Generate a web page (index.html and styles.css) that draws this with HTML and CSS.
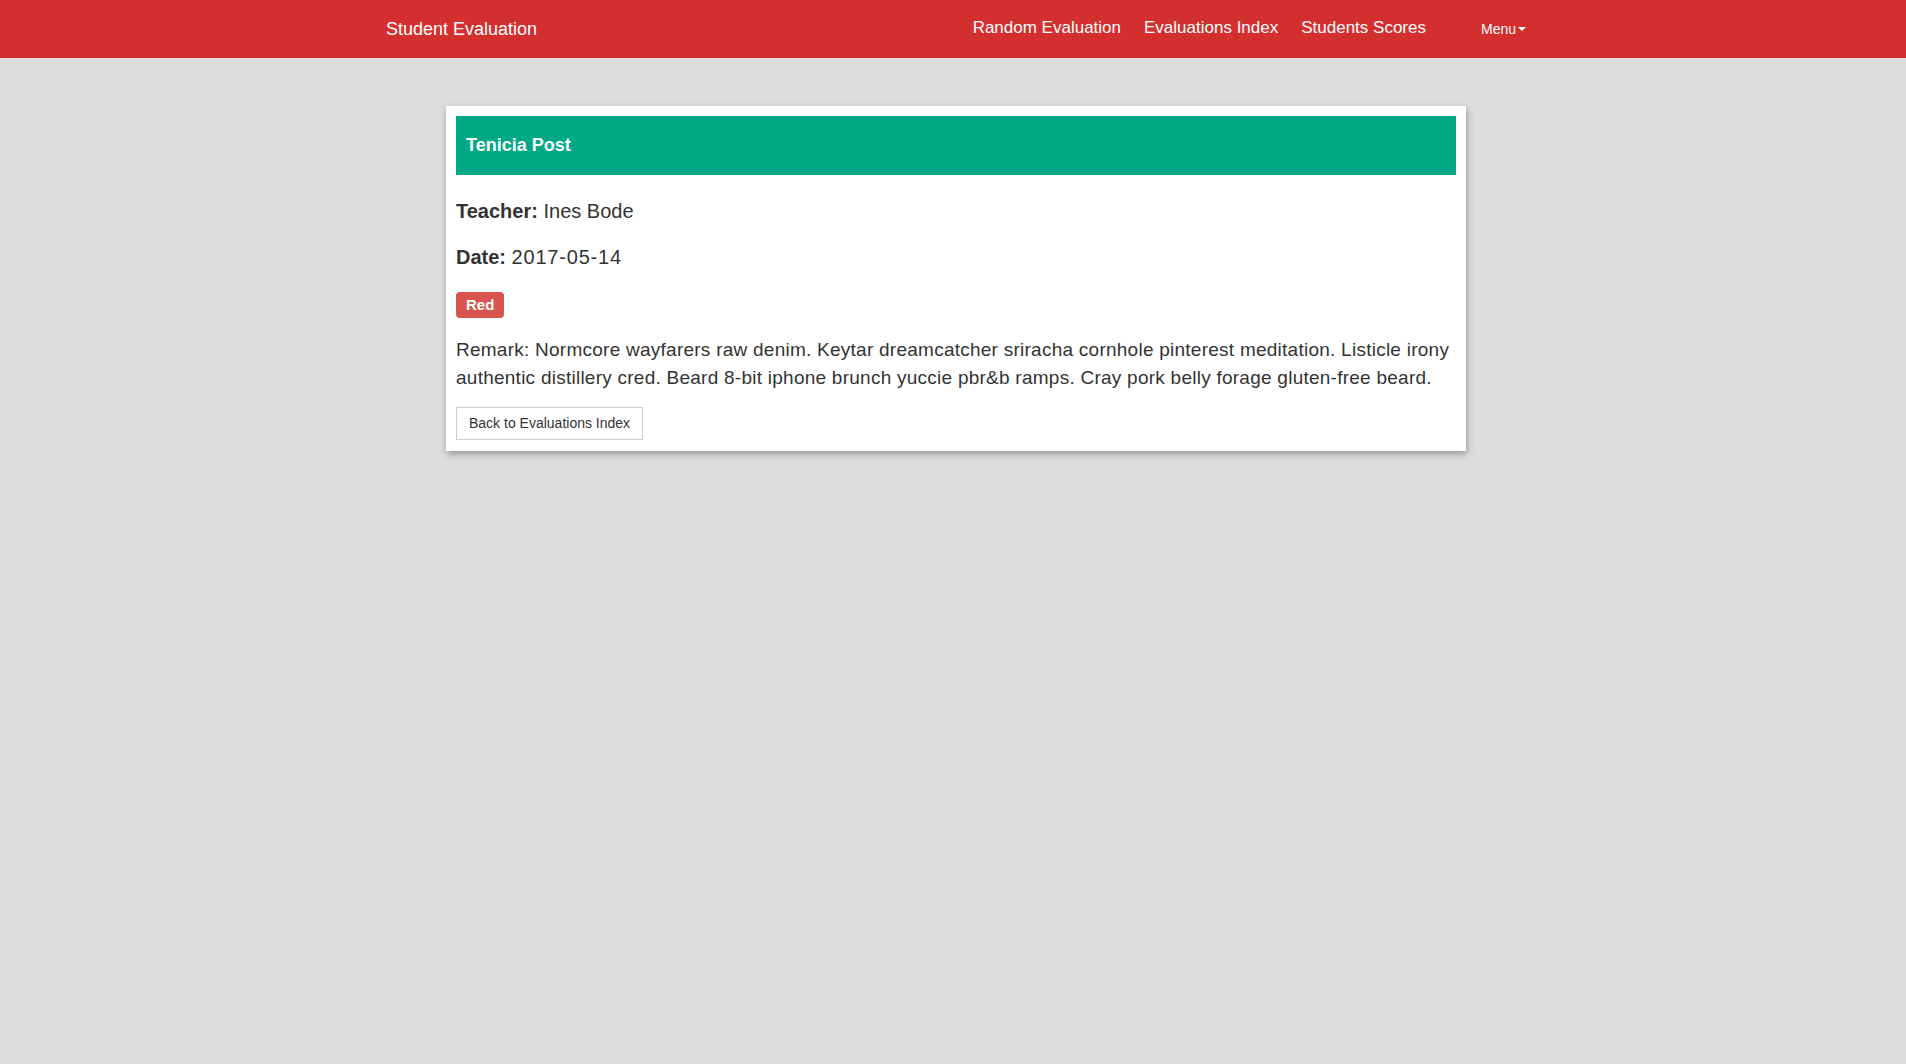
FILE: index.html
```html
<!DOCTYPE html>
<html lang="en">
<head>
<meta charset="utf-8">
<title>Student Evaluation</title>
<link rel="stylesheet" href="styles.css">
</head>
<body>
<nav class="navbar">
  <div class="nav-inner">
    <a class="brand" href="#">Student Evaluation</a>
    <div class="nav-right">
      <a class="nav-link" href="#">Random Evaluation</a>
      <a class="nav-link" href="#">Evaluations Index</a>
      <a class="nav-link" href="#">Students Scores</a>
      <a class="nav-menu" href="#">Menu<span class="caret"></span></a>
    </div>
  </div>
</nav>
<main class="page">
  <section class="card">
    <div class="card-header">Tenicia Post</div>
    <p class="field"><strong>Teacher:</strong> Ines Bode</p>
    <p class="field"><strong>Date:</strong> <span class="date">2017-05-14</span></p>
    <div class="badge-row"><span class="badge">Red</span></div>
    <p class="remark">Remark: Normcore wayfarers raw denim. Keytar dreamcatcher sriracha cornhole pinterest meditation. Listicle irony authentic distillery cred. Beard 8-bit iphone brunch yuccie pbr&amp;b ramps. Cray pork belly forage gluten-free beard.</p>
    <a class="btn" href="#">Back to Evaluations Index</a>
  </section>
</main>
</body>
</html>
```
FILE: styles.css
```css
* { box-sizing: border-box; }
html, body { margin: 0; padding: 0; }
body {
  background: #dddddd;
  font-family: "Liberation Sans", Arial, sans-serif;
  color: #333333;
  min-height: 1064px;
}
a { text-decoration: none; }

.navbar {
  background: #d32f2f;
  height: 58px;
}
.nav-inner {
  width: 1146px;
  margin: 0 auto;
  height: 100%;
  display: flex;
  align-items: center;
  justify-content: space-between;
  padding: 0 0 2px 6px;
}
.brand {
  color: #ffffff;
  font-size: 18px;
  line-height: 20px;
  padding-top: 1px;
}
.nav-right {
  display: flex;
  align-items: center;
}
.nav-link {
  color: #ffffff;
  font-size: 17px;
  line-height: 20px;
  margin-right: 23px;
}
.nav-link:nth-child(3) { margin-right: 55px; }
.nav-menu {
  color: #ffffff;
  font-size: 14px;
  line-height: 20px;
  display: flex;
  align-items: center;
  padding-top: 1px;
}
.caret {
  display: inline-block;
  width: 0;
  height: 0;
  margin-left: 2px;
  border-top: 4px solid #ffffff;
  border-left: 4px solid transparent;
  border-right: 4px solid transparent;
}

.page {
  padding-top: 48px;
  padding-left: 6px;
  display: flex;
  justify-content: center;
}
.card {
  width: 1020px;
  background: #ffffff;
  padding: 10px 10px 11px;
  box-shadow: 1px 3px 7px rgba(0, 0, 0, 0.32);
}
.card-header {
  background: #00a886;
  color: #ffffff;
  font-weight: bold;
  font-size: 18px;
  height: 59px;
  padding: 0 10px;
  display: flex;
  align-items: center;
}
.field {
  font-size: 20px;
  line-height: 28px;
  margin: 0;
}
.date { letter-spacing: 0.8px; }
.card-header + .field { margin-top: 22px; }
.field + .field { margin-top: 18px; }
.badge-row {
  margin-top: 21px;
  line-height: 0;
}
.badge {
  display: inline-block;
  background: #d9534f;
  color: #ffffff;
  font-weight: bold;
  font-size: 15px;
  line-height: 26px;
  height: 26px;
  padding: 0 10px;
  border-radius: 4px;
}
.remark {
  font-size: 19px;
  letter-spacing: 0.25px;
  line-height: 28px;
  margin: 18px 0 15px;
}
.btn {
  display: inline-block;
  color: #333333;
  font-size: 14px;
  line-height: 31px;
  height: 33px;
  padding: 0 12px;
  border: 1px solid #cccccc;
  background: #ffffff;
}
```
